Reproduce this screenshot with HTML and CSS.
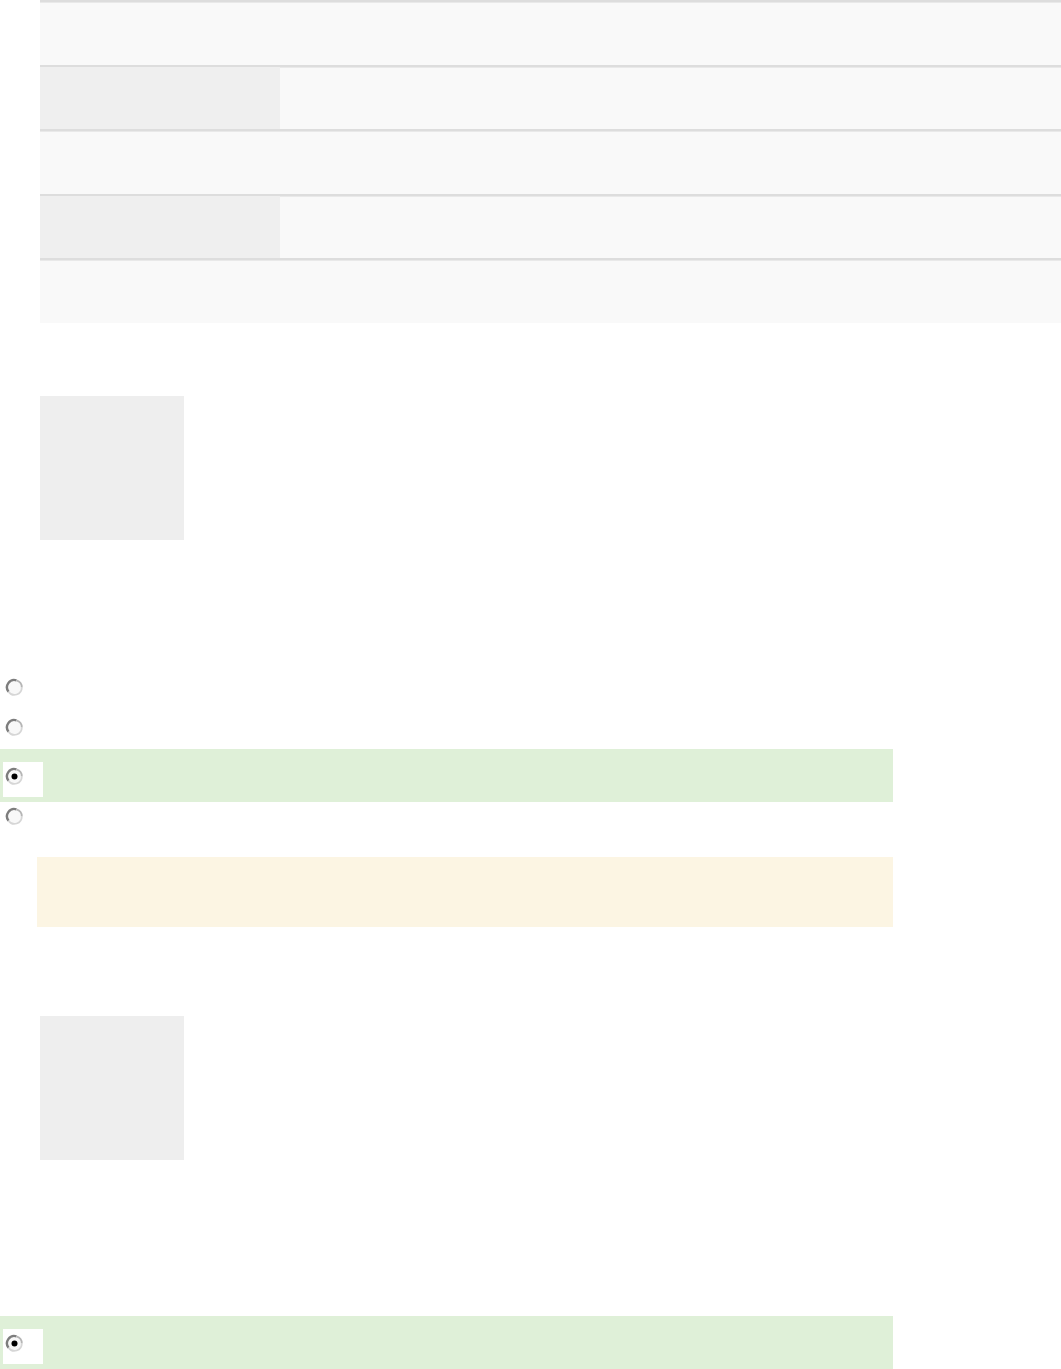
FILE: index.html
```html
<!DOCTYPE html>
<html>
<head>
<meta charset="utf-8">
<link rel="stylesheet" href="styles.css">
</head>
<body>
<div class="page">
  <div class="grid">
    <div class="row row-full"><div class="cell"></div></div>
    <div class="row row-split"><div class="cell head"></div><div class="cell"></div></div>
    <div class="row row-full"><div class="cell"></div></div>
    <div class="row row-split"><div class="cell head"></div><div class="cell"></div></div>
    <div class="row row-full"><div class="cell"></div></div>
  </div>

  <div class="thumb thumb-first"></div>

  <div class="options">
    <div class="option first">
      <div class="rbox"><svg class="radio" viewBox="0 0 19 19"><circle cx="9.5" cy="9.5" r="7.3" fill="#f8f8f8"/><path d="M11.5 2.3 A7.3 7.3 0 0 0 3.5 13.7" fill="none" stroke="#7d7d7d" stroke-width="2.4"/><path d="M11.5 2.3 A7.3 7.3 0 0 1 16.8 9.5" fill="none" stroke="#b5b5b5" stroke-width="1.8"/><path d="M16.8 9.5 A7.3 7.3 0 0 1 3.5 13.7" fill="none" stroke="#d6d6d6" stroke-width="1.8"/></svg></div>
    </div>
    <div class="option">
      <div class="rbox"><svg class="radio" viewBox="0 0 19 19"><circle cx="9.5" cy="9.5" r="7.3" fill="#f8f8f8"/><path d="M11.5 2.3 A7.3 7.3 0 0 0 3.5 13.7" fill="none" stroke="#7d7d7d" stroke-width="2.4"/><path d="M11.5 2.3 A7.3 7.3 0 0 1 16.8 9.5" fill="none" stroke="#b5b5b5" stroke-width="1.8"/><path d="M16.8 9.5 A7.3 7.3 0 0 1 3.5 13.7" fill="none" stroke="#d6d6d6" stroke-width="1.8"/></svg></div>
    </div>
    <div class="option correct">
      <div class="rbox white"><svg class="radio" viewBox="0 0 19 19"><circle cx="9.5" cy="9.5" r="7.3" fill="#f8f8f8"/><path d="M11.5 2.3 A7.3 7.3 0 0 0 3.5 13.7" fill="none" stroke="#7d7d7d" stroke-width="2.4"/><path d="M11.5 2.3 A7.3 7.3 0 0 1 16.8 9.5" fill="none" stroke="#b5b5b5" stroke-width="1.8"/><path d="M16.8 9.5 A7.3 7.3 0 0 1 3.5 13.7" fill="none" stroke="#d6d6d6" stroke-width="1.8"/><circle cx="9.5" cy="9.5" r="3" fill="#000"/></svg></div>
    </div>
    <div class="option tight">
      <div class="rbox"><svg class="radio" viewBox="0 0 19 19"><circle cx="9.5" cy="9.5" r="7.3" fill="#f8f8f8"/><path d="M11.5 2.3 A7.3 7.3 0 0 0 3.5 13.7" fill="none" stroke="#7d7d7d" stroke-width="2.4"/><path d="M11.5 2.3 A7.3 7.3 0 0 1 16.8 9.5" fill="none" stroke="#b5b5b5" stroke-width="1.8"/><path d="M16.8 9.5 A7.3 7.3 0 0 1 3.5 13.7" fill="none" stroke="#d6d6d6" stroke-width="1.8"/></svg></div>
    </div>
  </div>

  <div class="feedback"></div>

  <div class="thumb thumb-second"></div>

  <div class="options last">
    <div class="option correct">
      <div class="rbox white"><svg class="radio" viewBox="0 0 19 19"><circle cx="9.5" cy="9.5" r="7.3" fill="#f8f8f8"/><path d="M11.5 2.3 A7.3 7.3 0 0 0 3.5 13.7" fill="none" stroke="#7d7d7d" stroke-width="2.4"/><path d="M11.5 2.3 A7.3 7.3 0 0 1 16.8 9.5" fill="none" stroke="#b5b5b5" stroke-width="1.8"/><path d="M16.8 9.5 A7.3 7.3 0 0 1 3.5 13.7" fill="none" stroke="#d6d6d6" stroke-width="1.8"/><circle cx="9.5" cy="9.5" r="3" fill="#000"/></svg></div>
    </div>
  </div>
</div>
</body>
</html>
```

FILE: styles.css
```css
html, body {
  margin: 0;
  padding: 0;
  background: #ffffff;
  font-family: "Liberation Sans", Arial, sans-serif;
  overflow: hidden;
}

.page {
  width: 1061px;
  height: 1369px;
  overflow: hidden;
}

.grid {
  margin-left: 40px;
  width: 1021px;
  display: flex;
  flex-direction: column;
}

.row {
  display: flex;
  height: 64.5px;
  box-sizing: border-box;
  border-top: 2px solid #dddddd;
  box-shadow: inset 0 1px 0 #e9e9e9;
  background: #f9f9f9;
}

.row .cell {
  flex: 1;
}

.row-split .head {
  flex: 0 0 240px;
  background: #efefef;
}

.thumb {
  margin-left: 40px;
  width: 144px;
  height: 144px;
  background: #eeeeee;
}

.thumb-first {
  margin-top: 73.5px;
}

.thumb-second {
  margin-top: 89px;
}

.options {
  width: 893px;
  margin-top: 133px;
}

.options.last {
  margin-top: 156px;
}

.option {
  padding-top: 5px;
}

.option.first {
  padding-top: 0;
}

.option.tight {
  padding-top: 0;
}

.option.correct {
  background: #dff0d8;
  margin-top: 1px;
  padding-top: 13px;
  padding-bottom: 5px;
}

.rbox {
  margin-left: 3px;
  width: 40px;
  height: 35px;
  box-sizing: border-box;
  padding: 5px 0 0 2px;
}

.rbox.white {
  background: #ffffff;
}

.radio {
  display: block;
  width: 19px;
  height: 19px;
}

.feedback {
  margin-top: 20px;
  margin-left: 37px;
  width: 856px;
  height: 70px;
  background: #fcf5e3;
}
```
